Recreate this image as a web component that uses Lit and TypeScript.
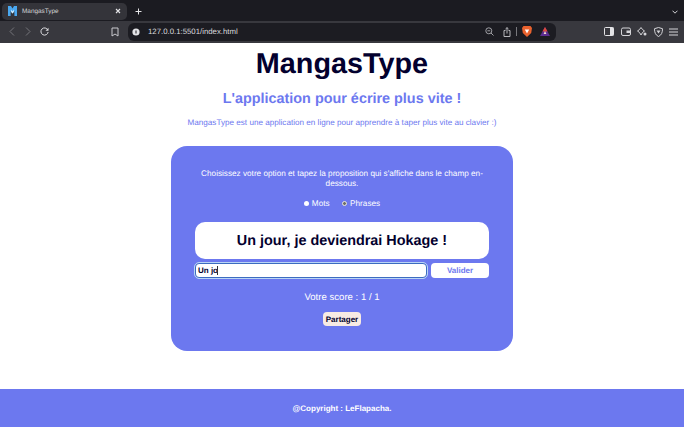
import { LitElement, html, css } from "lit";
import { customElement } from "lit/decorators.js";

@customElement("app-root")
export class AppRoot extends LitElement {
  static styles = css`
    :host { display: flex; flex-direction: column; height: 427px; width: 684px; overflow: hidden; background: #fff; font-family: "Liberation Sans", Arial, sans-serif; text-rendering: geometricPrecision; }
    svg { display: block; }
    .tabs { height: 21px; background: #1b1b21; display: flex; align-items: center; padding: 2px 0 0 2px; box-sizing: border-box; }
    .tab { width: 125px; height: 17px; margin-top: -1px; background: #34343a; border-radius: 5px; display: flex; align-items: center; box-sizing: border-box; padding: 0 0 0 6px; color: #d4d4d8; font-size: 6.4px; }
    .tab .title { margin-left: 5px; flex: 1; }
    .tab .x { margin-right: 6px; }
    .plus { margin-left: 8px; }
    .spacer { flex: 1; }
    .chev { margin-right: 6px; }
    .bar { height: 22px; padding-bottom: 1px; background: #38383e; display: flex; align-items: center; box-sizing: border-box; }
    .nav { display: flex; align-items: center; gap: 9.5px; padding-left: 9px; width: 128px; box-sizing: border-box; }
    .book { margin-left: 52.5px; }
    .url { width: 428px; height: 18px; background: #1c1c22; border-radius: 6px; display: flex; align-items: center; box-sizing: border-box; padding: 0 6px 0 4px; color: #d9d9dd; font-size: 7.8px; }
    .url .addr { margin-left: 8px; flex: 1; }
    .urlicons { display: flex; align-items: center; }
    .share-ic { margin-left: 9px; }
    .sep { width: 1px; height: 9px; background: #77777c; margin: 0 5px; }
    .bat { margin-left: 8px; }
    .tools { display: flex; align-items: center; gap: 6.5px; margin-left: 48px; }
    main { flex: 1; display: flex; flex-direction: column; align-items: center; }
    h1 { margin: 5px 0 0; font-size: 28.8px; line-height: 33px; font-weight: 700; color: #03002e; }
    h2 { margin: 10px 0 0; font-size: 14.4px; line-height: 17px; color: #6c78ef; font-weight: 700; }
    .lead { margin: 9.5px 0 0; font-size: 8.15px; line-height: 10px; color: #6c78ef; }
    .card { margin-top: 18.5px; width: 342px; height: 205px; box-sizing: border-box; background: #6c78ef; border-radius: 16px; padding: 23px 24px 0; display: flex; flex-direction: column; align-items: center; color: #fff; }
    .hint { font-size: 8.2px; line-height: 10px; text-align: center; width: 294px; }
    .opts { display: flex; align-items: center; margin-top: 9.5px; font-size: 8.2px; line-height: 10px; }
    .radio { width: 5px; height: 5px; border-radius: 50%; background: #fff; margin-right: 3px; }
    .radio.on { background: #6d6d68; border: 1px solid #e8e8e0; width: 3.5px; height: 3.5px; }
    .opt { margin-right: 12px; }
    .opt:last-child { margin-right: 0; }
    .prompt { margin-top: 13.5px; width: 294px; height: 37px; background: #fff; border-radius: 10px; color: #03002e; font-size: 14.4px; font-weight: 700; display: flex; align-items: center; justify-content: center; }
    .row { display: flex; width: 294px; justify-content: space-between; margin-top: 3.5px; align-items: center; }
    .input { width: 232px; height: 15px; box-sizing: border-box; background: #fff; border-radius: 4px; outline: 1px solid #b9d4f6; border: 1px solid #3c6cc0; color: #03002e; font-size: 8px; font-weight: 700; line-height: 13px; padding-left: 2px; display: flex; align-items: center; }
    .caret { width: 1px; height: 9px; background: #333; margin-left: -1px; }
    .send { width: 58px; height: 15px; background: #fff; border-radius: 4px; color: #6c78ef; font-size: 8px; font-weight: 700; display: flex; align-items: center; justify-content: center; }
    .score { margin-top: 14px; font-size: 9.6px; line-height: 11px; }
    .share { margin-top: 9.5px; width: 38px; height: 14px; background: #f8ebe4; border-radius: 4px; color: #03002e; font-size: 8px; font-weight: 700; display: flex; align-items: center; justify-content: center; }
    footer { height: 38px; background: #6c78ef; color: #fff; font-size: 8px; font-weight: 700; display: flex; align-items: center; justify-content: center; }
  `;

  render() {
    return html`
      <div class="tabs">
        <div class="tab">
          <svg width="9" height="10" viewBox="0 0 9 10"><path d="M0 0h3l1.500 2.500L6 0h3v10H6.400V5L4.500 7.500 2.600 5v5H0z" fill="#4aa8f0"/><path d="M3.200 3.600L4.500 5.500 5.800 3.600V6L4.500 7.500 3.200 6z" fill="#d8f0ff"/></svg>
          <span class="title">MangasType</span>
          <svg class="x" width="6" height="6" viewBox="0 0 6 6"><path d="M1 1l4 4M5 1L1 5" stroke="#e4e4e7" stroke-width="1.100"/></svg>
        </div>
        <svg class="plus" width="7" height="7" viewBox="0 0 7 7"><path d="M3.500 .5v6M.5 3.500h6" stroke="#e4e4e7" stroke-width="1"/></svg>
        <div class="spacer"></div>
        <svg class="chev" width="6" height="4" viewBox="0 0 6 4"><path d="M.5 .7L3 3.200 5.500 .7" stroke="#d4d4d8" stroke-width="1" fill="none"/></svg>
      </div>
      <div class="bar">
        <div class="nav">
          <svg width="6" height="9" viewBox="0 0 6 9"><path d="M5 .5L1 4.500l4 4" stroke="#74747a" fill="none"/></svg>
          <svg width="6" height="9" viewBox="0 0 6 9"><path d="M1 .5l4 4-4 4" stroke="#74747a" fill="none"/></svg>
          <svg width="9" height="9" viewBox="0 0 9 9"><path d="M7.800 3A3.600 3.600 0 1 0 8.100 5" stroke="#dcdce0" fill="none"/><path d="M8.500 .8v3h-3z" fill="#dcdce0"/></svg>
          <svg class="book" width="8" height="10" viewBox="0 0 8 10"><path d="M1 1h6v8L4 7 1 9z" stroke="#c9c9ce" fill="none"/></svg>
        </div>
        <div class="url">
          <svg width="8" height="8" viewBox="0 0 8 8"><circle cx="4" cy="4" r="3.600" fill="#e4e4e7"/><path d="M4 2.500v3" stroke="#1c1c22"/></svg>
          <span class="addr">127.0.0.1:5501/index.html</span>
          <div class="urlicons">
            <svg width="9" height="9" viewBox="0 0 9 9"><circle cx="3.800" cy="3.800" r="3" stroke="#a0a0a5" fill="none"/><path d="M6 6l2.500 2.500M2.400 3.800h2.800" stroke="#a0a0a5"/></svg>
            <svg class="share-ic" width="8" height="10" viewBox="0 0 8 10"><path d="M2.500 3.500H1v6h6v-6H5.500M4 6.500V.8M2.500 2L4 .6 5.500 2" stroke="#b5b5ba" fill="none"/></svg>
            <div class="sep"></div>
            <svg width="10" height="11" viewBox="0 0 10 11"><path d="M1.500 0h7L10 2l-.8 5L5 11 .8 7 0 2z" fill="#e9622e"/><path d="M2.800 3.500h4.400L5 7.500z" fill="#fff"/></svg>
            <svg class="bat" width="10" height="9" viewBox="0 0 10 9"><path d="M5 0l5 9H0z" fill="#5b2d91"/><path d="M5 0l2.500 4.500h-5z" fill="#e0493c"/><path d="M5 4l1.400 3H3.600z" fill="#f3d9d0"/></svg>
          </div>
        </div>
        <div class="tools">
          <svg width="10" height="9" viewBox="0 0 10 9"><rect x=".5" y=".5" width="9" height="8" rx="1" stroke="#e4e4e7" fill="none"/><rect x="6" y=".5" width="3.500" height="8" fill="#e4e4e7"/></svg>
          <svg width="10" height="9" viewBox="0 0 10 9"><rect x=".5" y="1" width="9" height="7.500" rx="1.500" stroke="#d4d4d8" fill="none"/><rect x="5.500" y="3.500" width="4" height="2.500" fill="#d4d4d8"/></svg>
          <svg width="10" height="9" viewBox="0 0 10 9"><path d="M4 .5l1.500 2 2 1.500-2 1.500L4 8 2.500 5.500.5 4l2-1.500z" stroke="#d4d4d8" fill="none"/><circle cx="8" cy="7" r="1.500" fill="#d4d4d8"/></svg>
          <svg width="9" height="10" viewBox="0 0 9 10"><path d="M4.500 .5l4 1.200c0 4-1 6.300-4 7.800-3-1.500-4-3.800-4-7.800z" stroke="#d4d4d8" fill="none"/><path d="M2.500 3.500h4L4.500 6.500z" fill="#d4d4d8"/></svg>
          <svg width="9" height="8" viewBox="0 0 9 8"><path d="M0 1h9M0 4h9M0 7h9" stroke="#d4d4d8"/></svg>
        </div>
      </div>
      <main>
        <h1>MangasType</h1>
        <h2>L'application pour écrire plus vite !</h2>
        <p class="lead">MangasType est une application en ligne pour apprendre à taper plus vite au clavier :)</p>
        <section class="card">
          <div class="hint">Choisissez votre option et tapez la proposition qui s'affiche dans le champ en-dessous.</div>
          <div class="opts">
            <span class="radio"></span><span class="opt">Mots</span>
            <span class="radio on"></span><span class="opt">Phrases</span>
          </div>
          <div class="prompt">Un jour, je deviendrai Hokage !</div>
          <div class="row">
            <div class="input">Un jo<span class="caret"></span></div>
            <div class="send">Valider</div>
          </div>
          <div class="score">Votre score : 1 / 1</div>
          <div class="share">Partager</div>
        </section>
      </main>
      <footer>@Copyright : LeFlapacha.</footer>
    `;
  }
}
